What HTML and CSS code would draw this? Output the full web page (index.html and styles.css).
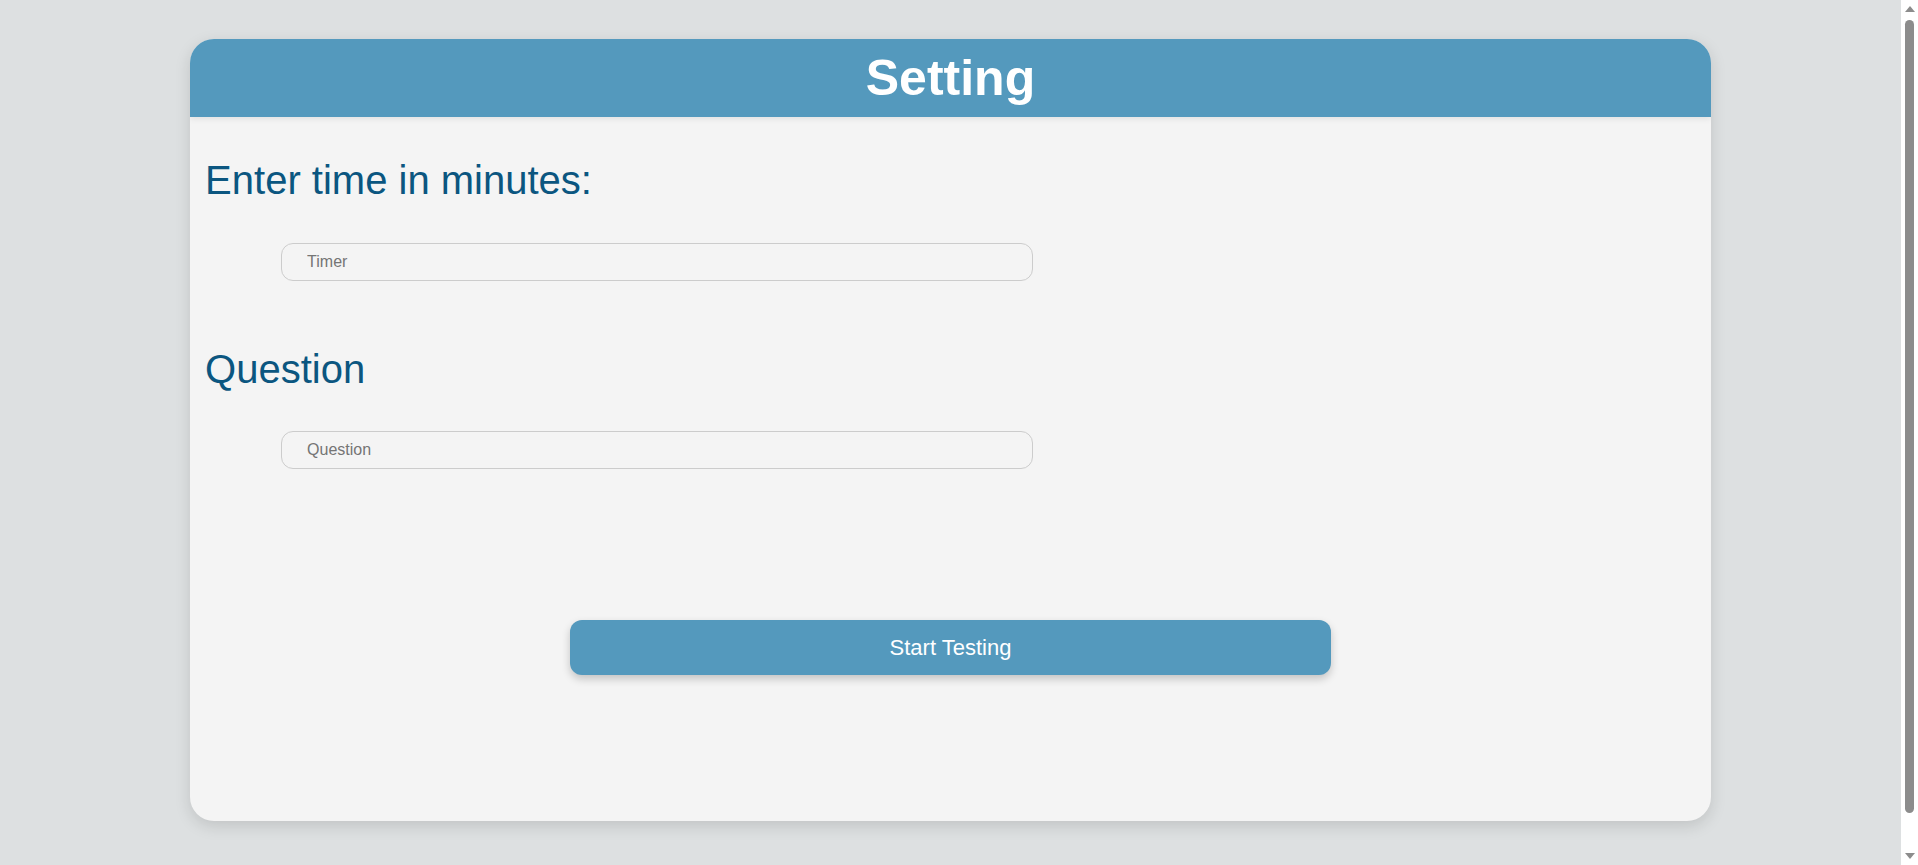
FILE: index.html
```html
<!DOCTYPE html>
<html lang="en">
<head>
<meta charset="utf-8">
<title>Setting</title>
<link rel="stylesheet" href="styles.css">
</head>
<body>
<div class="page">
  <div class="card">
    <header class="card-header">
      <h1 class="title">Setting</h1>
    </header>
    <div class="card-body">
      <h2 class="label">Enter time in minutes:</h2>
      <input class="field" type="text" placeholder="Timer">
      <h2 class="label label-second">Question</h2>
      <input class="field" type="text" placeholder="Question">
      <button class="start-btn" type="button">Start Testing</button>
    </div>
  </div>
</div>
<div class="scrollbar" aria-hidden="true">
  <span class="scroll-arrow scroll-up"></span>
  <span class="scroll-thumb"></span>
  <span class="scroll-arrow scroll-down"></span>
</div>
</body>
</html>
```

FILE: styles.css
```css
html, body {
  margin: 0;
  padding: 0;
}

body {
  background: #dde0e1;
  font-family: "Liberation Sans", Arial, sans-serif;
}

.page {
  padding: 39px 17px 91px 0;
}

.card {
  width: 80%;
  margin: 0 auto;
  background: #f4f4f4;
  border-radius: 24px;
  overflow: hidden;
  box-shadow: 0 5px 16px rgba(0, 0, 0, 0.13);
}

.card-header {
  background: #5499bd;
  padding: 10px 0;
  text-align: center;
  position: relative;
  box-shadow: 0 2px 6px rgba(0, 0, 0, 0.08);
}

.title {
  margin: 0;
  font-size: 50px;
  font-weight: bold;
  color: #ffffff;
}

.card-body {
  display: flex;
  flex-direction: column;
  padding: 0 15px 146px;
}

.label {
  margin: 41px 0 0;
  font-size: 40px;
  font-weight: normal;
  color: #0b5680;
}

.label-second {
  margin-top: 66px;
}

.field {
  align-self: flex-start;
  box-sizing: border-box;
  width: 752px;
  height: 38px;
  margin: 40px 0 0 76px;
  padding: 0 25px;
  border: 1px solid #cccccc;
  border-radius: 12px;
  background: #f4f4f4;
  font-family: "Liberation Sans", Arial, sans-serif;
  font-size: 16px;
  color: #333333;
  outline: none;
}

.label-second + .field {
  margin-top: 39px;
}

.field::placeholder {
  color: #757575;
}

.start-btn {
  align-self: center;
  width: 51%;
  height: 55px;
  margin-top: 151px;
  border: none;
  border-radius: 12px;
  background: #5499bd;
  color: #ffffff;
  font-family: "Liberation Sans", Arial, sans-serif;
  font-size: 22px;
  box-shadow: 0 4px 8px rgba(0, 0, 0, 0.2);
  cursor: pointer;
}

/* imitation of the classic browser scrollbar seen in the reference */
.scrollbar {
  position: fixed;
  top: 0;
  right: 0;
  bottom: 0;
  width: 17px;
  background: #ffffff;
  display: flex;
  flex-direction: column;
  align-items: center;
}

.scroll-arrow {
  flex: none;
  width: 0;
  height: 0;
  border-left: 5px solid transparent;
  border-right: 5px solid transparent;
}

.scroll-up {
  margin-top: 6px;
  border-bottom: 6px solid #8c8c8c;
}

.scroll-down {
  margin-bottom: 6px;
  border-top: 6px solid #8c8c8c;
}

.scroll-thumb {
  flex: 1;
  width: 9px;
  margin: 8px 0 40px;
  background: #8c8c8c;
  border-radius: 5px;
}
```
